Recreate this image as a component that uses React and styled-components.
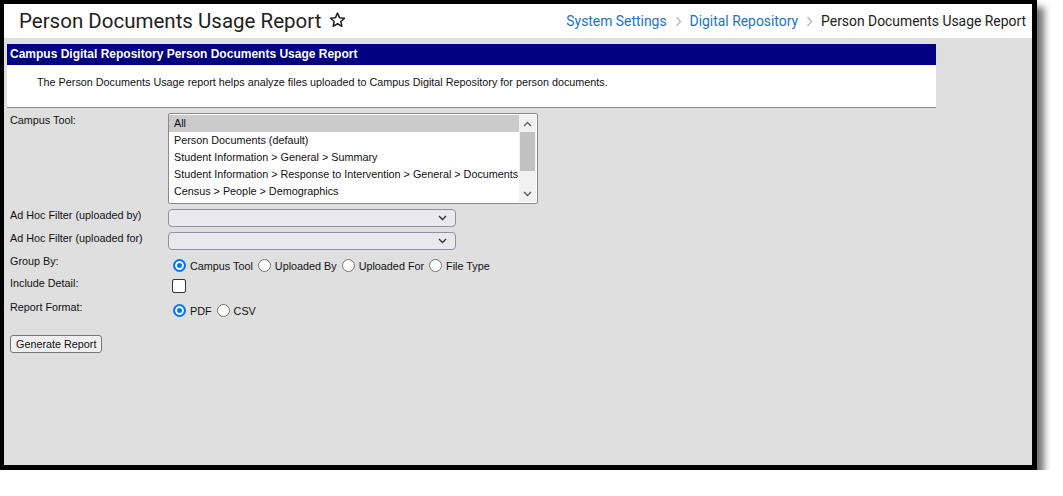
import React from "react";
import styled, { createGlobalStyle } from "styled-components";

const GlobalStyle = createGlobalStyle`
  html, body {
    margin: 0;
    padding: 0;
    background: #ffffff;
  }
  body {
    font-family: "Liberation Sans", Arial, sans-serif;
  }
`;

const campusTools = [
  "All",
  "Person Documents (default)",
  "Student Information > General > Summary",
  "Student Information > Response to Intervention > General > Documents",
  "Census > People > Demographics",
];

function Star() {
  return (
    <svg width="19" height="18" viewBox="0 0 24 24" fill="none">
      <path
        d="M12 2.8l2.75 6.1 6.65.62-5.02 4.4 1.48 6.52L12 17.02l-5.86 3.42 1.48-6.52-5.02-4.4 6.65-.62z"
        stroke="#1f1f1f"
        strokeWidth="2"
        strokeLinejoin="round"
      />
    </svg>
  );
}

function Crumb() {
  return (
    <svg width="7" height="11" viewBox="0 0 7 11">
      <path d="M1.5 1l4 4.5-4 4.5" stroke="#b5b5b5" strokeWidth="1.3" fill="none" />
    </svg>
  );
}

function Chevron() {
  return (
    <svg width="9" height="6" viewBox="0 0 9 6">
      <path d="M1 1l3.5 3.5L8 1" stroke="#333" strokeWidth="1.4" fill="none" />
    </svg>
  );
}

function Arrow({ up }) {
  return (
    <svg width="9" height="6" viewBox="0 0 9 6">
      <path
        d={up ? "M1 5l3.5-3.5L8 5" : "M1 1l3.5 3.5L8 1"}
        stroke="#606060"
        strokeWidth="1.4"
        fill="none"
      />
    </svg>
  );
}

function Radio({ checked, label }) {
  return (
    <RadioItem>
      <RadioDot checked={checked} />
      <span>{label}</span>
    </RadioItem>
  );
}

function App() {
  return (
    <>
      <GlobalStyle />
      <Frame>
        <Header>
          <Title>
            Person Documents Usage Report
            <Star />
          </Title>
          <Breadcrumbs>
            <CrumbLink>System Settings</CrumbLink>
            <Crumb />
            <CrumbLink>Digital Repository</CrumbLink>
            <Crumb />
            <CrumbCurrent>Person Documents Usage Report</CrumbCurrent>
          </Breadcrumbs>
        </Header>
        <Body>
          <Panel>
            <PanelHead>Campus Digital Repository Person Documents Usage Report</PanelHead>
            <PanelText>
              The Person Documents Usage report helps analyze files uploaded to Campus
              Digital Repository for person documents.
            </PanelText>
          </Panel>
          <Form>
            <Row top={5}>
              <Label>Campus Tool:</Label>
              <ListBox>
                <Options>
                  {campusTools.map((t, i) => (
                    <Option key={t} selected={i === 0}>
                      {t}
                    </Option>
                  ))}
                </Options>
                <Scrollbar>
                  <Arrow up />
                  <Thumb />
                  <Arrow />
                </Scrollbar>
              </ListBox>
            </Row>
            <Row top={4}>
              <Label>Ad Hoc Filter (uploaded by)</Label>
              <Select offset={1}>
                <Chevron />
              </Select>
            </Row>
            <Row top={4}>
              <Label>Ad Hoc Filter (uploaded for)</Label>
              <Select offset={1}>
                <Chevron />
              </Select>
            </Row>
            <Row top={4}>
              <Label>Group By:</Label>
              <Options2 offset={5}>
                <Radio checked label="Campus Tool" />
                <Radio label="Uploaded By" />
                <Radio label="Uploaded For" />
                <Radio label="File Type" />
              </Options2>
            </Row>
            <Row top={4}>
              <Label>Include Detail:</Label>
              <Checkbox />
            </Row>
            <Row top={7}>
              <Label>Report Format:</Label>
              <Options2 offset={4}>
                <Radio checked label="PDF" />
                <Radio label="CSV" />
              </Options2>
            </Row>
            <Button>Generate Report</Button>
          </Form>
        </Body>
      </Frame>
    </>
  );
}

export default App;

const Frame = styled.div`
  box-sizing: border-box;
  width: 1037px;
  height: 470px;
  border: 4px solid #000;
  border-right-width: 5px;
  border-bottom-width: 5px;
  background: #dfdfdf;
  box-shadow: 7px 7px 7px rgba(0, 0, 0, 0.55);
  display: flex;
  flex-direction: column;
  overflow: hidden;
`;

const Header = styled.div`
  height: 34px;
  background: #fff;
  display: flex;
  align-items: center;
  justify-content: space-between;
  padding: 0 6px 0 15px;
  flex-shrink: 0;
`;

const Title = styled.div`
  font-family: Roboto, "Liberation Sans", sans-serif;
  font-size: 20.5px;
  color: #222;
  display: flex;
  align-items: center;
  gap: 7px;
  svg {
    margin-top: -2px;
  }
`;

const Breadcrumbs = styled.div`
  display: flex;
  align-items: center;
  gap: 8px;
  font-family: Roboto, "Liberation Sans", sans-serif;
  font-size: 13.9px;
`;

const CrumbLink = styled.span`
  color: #1b74c4;
`;

const CrumbCurrent = styled.span`
  color: #222;
`;

const Body = styled.div`
  flex: 1;
  padding: 6px 3px 0;
`;

const Panel = styled.div`
  width: 929px;
  background: #fff;
  border-bottom: 1px solid #8a8a8a;
`;

const PanelHead = styled.div`
  height: 21px;
  background: #000080;
  color: #fff;
  font-size: 12px;
  font-weight: bold;
  line-height: 21px;
  padding-left: 3px;
`;

const PanelText = styled.div`
  height: 42px;
  box-sizing: border-box;
  padding: 11px 0 0 30px;
  font-size: 10.8px;
  color: #111;
`;

const Form = styled.div`
  padding-left: 3px;
`;

const Row = styled.div`
  display: flex;
  align-items: flex-start;
  margin-top: ${(p) => p.top}px;
`;

const Label = styled.div`
  width: 158px;
  flex-shrink: 0;
  font-size: 10.8px;
  line-height: 14px;
  color: #111;
`;

const ListBox = styled.div`
  box-sizing: border-box;
  width: 370px;
  height: 91px;
  background: #fff;
  border: 1px solid #8a8a8a;
  border-radius: 2px;
  display: flex;
  padding: 1px 1px 1px 0;
`;

const Options = styled.div`
  flex: 1;
  min-width: 0;
`;

const Option = styled.div`
  height: 17px;
  line-height: 17px;
  padding-left: 5px;
  font-size: 10.8px;
  white-space: nowrap;
  color: #111;
  background: ${(p) => (p.selected ? "#cbcbcb" : "transparent")};
`;

const Scrollbar = styled.div`
  width: 17px;
  flex-shrink: 0;
  background: #f1f1f1;
  display: flex;
  flex-direction: column;
  align-items: center;
  justify-content: space-between;
  padding: 6px 0 5px;
  box-sizing: border-box;
`;

const Thumb = styled.div`
  width: 15px;
  flex: 1;
  margin: 5px 0 20px;
  background: #c1c1c1;
`;

const Select = styled.div`
  box-sizing: border-box;
  width: 288px;
  height: 18px;
  margin-top: ${(p) => p.offset}px;
  background: #e9e9ed;
  border: 1px solid #8f8f9d;
  border-radius: 4px;
  display: flex;
  align-items: center;
  justify-content: flex-end;
  padding-right: 8px;
`;

const Options2 = styled.div`
  display: flex;
  align-items: center;
  gap: 5px;
  margin-top: ${(p) => p.offset}px;
  padding-left: 5px;
`;

const RadioItem = styled.label`
  display: flex;
  align-items: center;
  gap: 4px;
  font-size: 10.8px;
  color: #111;
`;

const RadioDot = styled.span`
  box-sizing: border-box;
  width: 13px;
  height: 13px;
  border-radius: 50%;
  border: ${(p) => (p.checked ? "2px solid #0075ff" : "1px solid #767676")};
  background: #fff;
  box-shadow: ${(p) => (p.checked ? "inset 0 0 0 2px #fff, inset 0 0 0 5px #0075ff" : "none")};
`;

const Checkbox = styled.div`
  box-sizing: border-box;
  width: 14px;
  height: 14px;
  margin: 3px 0 0 4px;
  background: #fff;
  border: 1px solid #333;
  border-radius: 2px;
`;

const Button = styled.button`
  margin-top: 18px;
  height: 18px;
  padding: 0 5px;
  font-family: "Liberation Sans", Arial, sans-serif;
  font-size: 10.8px;
  color: #111;
  background: #efefef;
  border: 1px solid #767676;
  border-radius: 3px;
`;
